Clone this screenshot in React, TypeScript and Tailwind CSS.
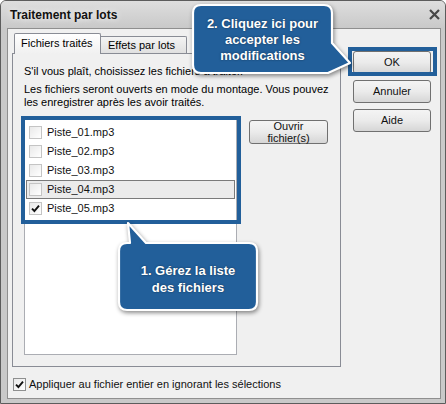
import React from "react";

function Check() {
  return (
    <svg width="9" height="9" viewBox="0 0 9 9" className="block">
      <path d="M1 4.6 L3.4 7 L8 1.6" fill="none" stroke="#111" strokeWidth="1.9" />
    </svg>
  );
}

function Box({ checked, dark }: { checked?: boolean; dark?: boolean }) {
  return (
    <div
      className={
        "w-[13px] h-[13px] shrink-0 flex items-center justify-center border bg-linear-to-br from-[#e9e9e9] to-white " +
        (dark ? "border-[#8e8f8f]" : "border-[#c4c4c4]")
      }
    >
      {checked ? <Check /> : null}
    </div>
  );
}

function Btn({ children, className }: { children: React.ReactNode; className?: string }) {
  return (
    <div
      className={
        "w-[78px] h-[23px] border border-[#707070] rounded-[3px] bg-linear-to-b from-[#f4f4f4] via-[#ebebeb] to-[#d6d6d6] flex items-center justify-center text-center text-[#111] " +
        (className || "")
      }
    >
      {children}
    </div>
  );
}

const files = ["Piste_01.mp3", "Piste_02.mp3", "Piste_03.mp3", "Piste_04.mp3", "Piste_05.mp3"];

export default function App() {
  return (
    <div className="w-[446px] h-[404px] relative font-['Liberation_Sans',Arial,sans-serif] text-[11px] text-black overflow-hidden">
      <div className="w-full h-full flex flex-col border border-[#5c5c5c] rounded-t-[6px] bg-[#c9c9c9]">
        {/* Title bar */}
        <div className="h-[27px] shrink-0 flex items-center justify-between pl-[9px] pr-[5px] bg-linear-to-b from-[#dedede] to-[#c9c9c9] rounded-t-[5px]">
          <span className="font-bold text-[12px] text-[#111] [text-shadow:0_0_6px_#ffffff]">Traitement par lots</span>
          <svg width="11" height="11" viewBox="0 0 11 11" className="block mb-[1px]">
            <path d="M1 1 L10 10 M10 1 L1 10" stroke="#464646" strokeWidth="2.2" />
          </svg>
        </div>
        {/* Client */}
        <div className="ml-[6px] mr-[4px] h-[371px] shrink-0 border border-[#8f8f8f] bg-[#f0f0f0] flex flex-col">
          <div className="flex pl-[4px] pt-[4px]">
            {/* Tab control */}
            <div className="w-[329px] flex flex-col">
              <div className="h-[20px] flex items-end">
                <div className="ml-[2px] w-[87px] h-[21px] -mb-[1px] relative z-10 border border-b-0 border-[#898c95] rounded-t-[2px] bg-linear-to-b from-white to-[#f0f0f0] flex items-center pl-[6px] pb-[1px]">
                  Fichiers traités
                </div>
                <div className="w-[86px] h-[17px] border border-b-0 border-l-0 border-[#898c95] rounded-tr-[2px] bg-linear-to-b from-[#f4f4f4] to-[#e0e0e0] flex items-center pl-[7px] pt-[1px]">
                  Effets par lots
                </div>
              </div>
              <div className="h-[314px] border border-[#898c95] bg-[#f0f0f0] pl-[11px] pt-[11px] flex flex-col">
                <div className="leading-[13px]">S'il vous plaît, choisissez les fichiers à traiter.</div>
                <div className="leading-[13px] mt-[5px]">
                  Les fichiers seront ouverts en mode du montage. Vous pouvez
                  <br />
                  les enregistrer après les avoir traités.
                </div>
                <div className="flex mt-[7px]">
                  <div className="w-[213px] h-[239px] border border-[#abadb3] bg-white px-[1px] pt-[6px] flex flex-col">
                    {files.map((f, i) => (
                      <div
                        key={f}
                        className={
                          "h-[19px] flex items-center pl-[2px] border " +
                          (i === 3 ? "border-[#7a7a7a] bg-[#ebebeb]" : "border-transparent")
                        }
                      >
                        <Box checked={i === 4} />
                        <span className="ml-[5px] text-[#111]">{f}</span>
                      </div>
                    ))}
                  </div>
                  <Btn className="ml-[12px] mt-[4px] h-[24px] w-[79px] leading-[12px]">
                    Ouvrir
                    <br />
                    fichier(s)
                  </Btn>
                </div>
              </div>
            </div>
            {/* Buttons */}
            <div className="ml-[12px] mt-[18px] flex flex-col gap-[6px]">
              <Btn>OK</Btn>
              <Btn>Annuler</Btn>
              <Btn>Aide</Btn>
            </div>
          </div>
          <div className="flex items-center pl-[5px] mt-[9px]">
            <Box checked dark />
            <span className="ml-[3px] text-[#111]">Appliquer au fichier entier en ignorant les sélections</span>
          </div>
        </div>
      </div>

      {/* Highlight frames */}
      <div className="absolute left-[21px] top-[116px] w-[220px] h-[108px] border-4 border-[#225f9a]" />
      <div className="absolute left-[348px] top-[47px] w-[89px] h-[29px] border-4 border-[#225f9a]" />

      {/* Callout 1 */}
      <svg
        width="148"
        height="98"
        viewBox="0 0 148 98"
        className="absolute left-[115px] top-[218px] drop-shadow-[1px_2px_2px_rgba(0,0,0,0.45)]"
      >
        <path
          d="M12 25 L15 25 L13 5 L31 25 L134 25 Q142 25 142 33 L142 84 Q142 92 134 92 L12 92 Q4 92 4 84 L4 33 Q4 25 12 25 Z"
          fill="#225f9a"
          stroke="#ffffff"
          strokeWidth="2.2"
          strokeLinejoin="round"
        />
      </svg>
      <div className="absolute left-[119px] top-[243px] w-[138px] h-[67px] flex items-center justify-center pt-[4px] text-center text-white font-bold text-[13px] leading-[17px] [text-shadow:0_0_2px_rgba(0,0,0,0.5)]">
        1. Gérez la liste
        <br />
        des fichiers
      </div>

      {/* Callout 2 */}
      <svg
        width="168"
        height="80"
        viewBox="0 0 168 80"
        className="absolute left-[189px] top-[1px] drop-shadow-[1px_2px_2px_rgba(0,0,0,0.45)]"
      >
        <path
          d="M12 4 L135 4 Q143 4 143 12 L143 42 L161 62 L139 72 L12 72 Q4 72 4 64 L4 12 Q4 4 12 4 Z"
          fill="#225f9a"
          stroke="#ffffff"
          strokeWidth="2.2"
          strokeLinejoin="round"
        />
      </svg>
      <div className="absolute left-[193px] top-[5px] w-[139px] h-[68px] flex items-center justify-center pt-[2px] text-center text-white font-bold text-[13px] leading-[16px] [text-shadow:0_0_2px_rgba(0,0,0,0.5)]">
        2. Cliquez ici pour
        <br />
        accepter les
        <br />
        modifications
      </div>
    </div>
  );
}
